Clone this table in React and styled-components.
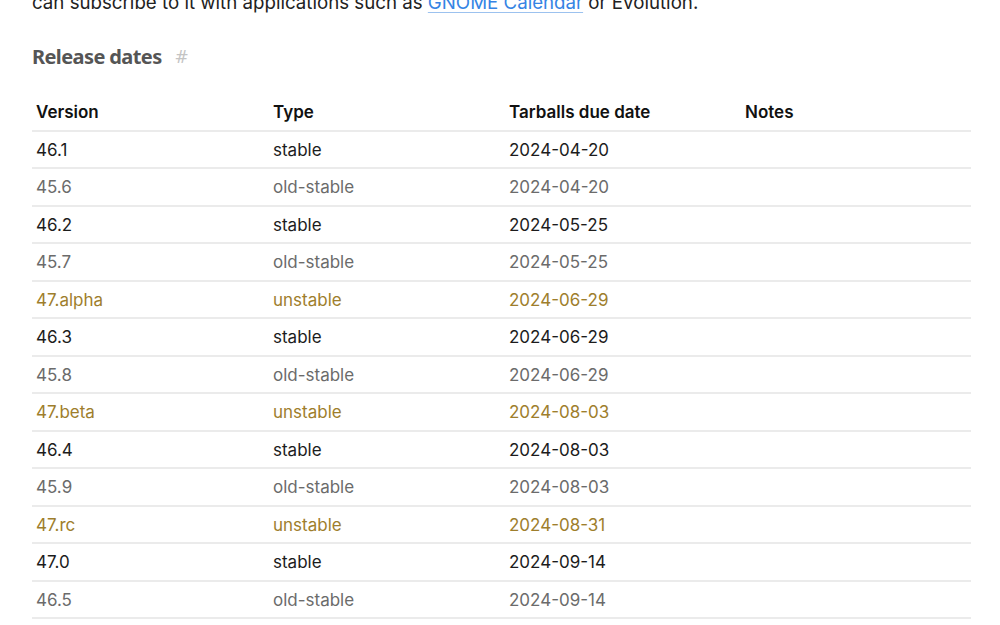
import React from 'react';
import styled, { createGlobalStyle } from 'styled-components';

const releases = [
  { version: '46.1', type: 'stable', date: '2024-04-20' },
  { version: '45.6', type: 'old-stable', date: '2024-04-20' },
  { version: '46.2', type: 'stable', date: '2024-05-25' },
  { version: '45.7', type: 'old-stable', date: '2024-05-25' },
  { version: '47.alpha', type: 'unstable', date: '2024-06-29' },
  { version: '46.3', type: 'stable', date: '2024-06-29' },
  { version: '45.8', type: 'old-stable', date: '2024-06-29' },
  { version: '47.beta', type: 'unstable', date: '2024-08-03' },
  { version: '46.4', type: 'stable', date: '2024-08-03' },
  { version: '45.9', type: 'old-stable', date: '2024-08-03' },
  { version: '47.rc', type: 'unstable', date: '2024-08-31' },
  { version: '47.0', type: 'stable', date: '2024-09-14' },
  { version: '46.5', type: 'old-stable', date: '2024-09-14' },
];

const colors = {
  stable: '#1c1c1c',
  'old-stable': '#6b6b6b',
  unstable: '#9e7e2c',
};

const GlobalStyle = createGlobalStyle`
  html, body {
    margin: 0;
    background: #ffffff;
    overflow: hidden;
  }
  body {
    font-family: Inter, "Noto Sans", sans-serif;
    color: #1c1c1c;
  }
`;

const Page = styled.main`
  padding: 0 29px 0 32px;
  margin-top: -10px;
`;

const Intro = styled.p`
  margin: 0;
  font-size: 18.7px;
  line-height: 26px;
  color: #222;
`;

const Link = styled.a`
  color: #3584e4;
  text-decoration: underline;
  text-decoration-color: #9cc2ef;
  text-underline-offset: 3px;
`;

const Heading = styled.h2`
  display: flex;
  align-items: center;
  gap: 13px;
  margin: 27px 0 0;
  font-family: "Noto Sans", sans-serif;
  font-size: 20px;
  font-weight: 700;
  letter-spacing: -0.6px;
  color: #555555;
`;

const Anchor = styled.span`
  font-family: "DejaVu Sans", sans-serif;
  font-weight: 400;
  font-size: 17px;
  color: #c4c4c4;
`;

const Table = styled.table`
  width: 100%;
  margin-top: 24px;
  border-collapse: collapse;
  table-layout: fixed;
  font-size: 17px;
`;

const Col = styled.col`
  width: ${p => p.$w};
`;

const Th = styled.th`
  text-align: left;
  font-weight: 600;
  padding: 7px 4px 6px;
  line-height: 22.5px;
  color: #111;
  border-bottom: 2px solid #ebebeb;
`;

const Row = styled.tr`
  color: ${p => colors[p.$type]};
  border-bottom: 2px solid #ebebeb;
`;

const Td = styled.td`
  padding: 7px 4px 6px;
  line-height: 22.5px;
`;

export default function App() {
  return (
    <>
      <GlobalStyle />
      <Page>
        <Intro>
          can subscribe to it with applications such as <Link href="#">GNOME Calendar</Link> or Evolution.
        </Intro>
        <Heading>
          Release dates <Anchor>#</Anchor>
        </Heading>
        <Table>
          <colgroup>
            <Col $w="237px" />
            <Col $w="236px" />
            <Col $w="236px" />
            <Col $w="auto" />
          </colgroup>
          <thead>
            <tr>
              <Th>Version</Th>
              <Th>Type</Th>
              <Th>Tarballs due date</Th>
              <Th>Notes</Th>
            </tr>
          </thead>
          <tbody>
            {releases.map(r => (
              <Row key={r.version} $type={r.type}>
                <Td>{r.version}</Td>
                <Td>{r.type}</Td>
                <Td>{r.date}</Td>
                <Td />
              </Row>
            ))}
          </tbody>
        </Table>
      </Page>
    </>
  );
}
